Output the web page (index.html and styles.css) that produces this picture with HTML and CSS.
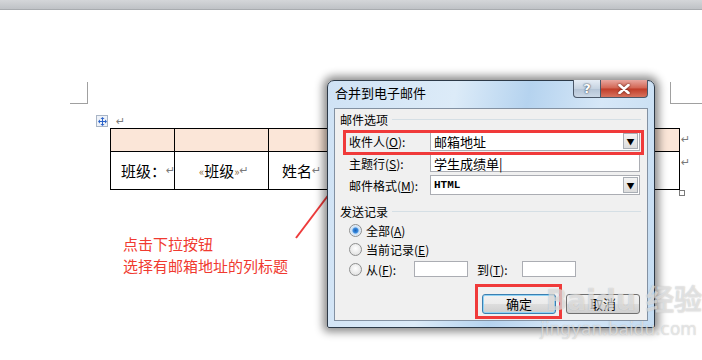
FILE: index.html
```html
<!DOCTYPE html>
<html lang="zh-CN">
<head>
    <meta charset="UTF-8" />
    <title>合并到电子邮件</title>
    <link rel="stylesheet" href="styles.css">
</head>
<body>

<div class="topbar"></div>

<div class="page">
    <div class="marks">
        <span class="mark mark-left"></span>
        <span class="mark mark-right"></span>
    </div>

    <div class="table-head">
        <span class="move-icon">
            <svg width="9" height="9" viewBox="0 0 9 9">
                <path d="M4.5 0 L6.5 2 H5 V4 H7 V2.5 L9 4.5 L7 6.5 V5 H5 V7 H6.5 L4.5 9 L2.5 7 H4 V5 H2 V6.5 L0 4.5 L2 2.5 V4 H4 V2 H2.5 Z" fill="#2a62c9"/>
            </svg>
        </span>
        <span class="ret">↵</span>
    </div>

    <div class="doc-table">
        <div class="row row-head">
            <div class="cell c1"></div>
            <div class="cell c2"></div>
            <div class="cell c3"></div>
            <div class="cell c4"></div>
        </div>
        <div class="row row-body">
            <div class="cell c1">班级：<span class="ret">↵</span></div>
            <div class="cell c2"><span class="chev">«</span>班级<span class="chev">»</span><span class="ret">↵</span></div>
            <div class="cell c3">姓名<span class="ret">↵</span></div>
            <div class="cell c4"></div>
        </div>
        <span class="end-mark end-1">↵</span>
        <span class="end-mark end-2">↵</span>
        <span class="resize-box"></span>
    </div>

    <div class="note">
        <p>点击下拉按钮</p>
        <p>选择有邮箱地址的列标题</p>
    </div>
</div>

<svg class="arrow" width="702" height="360" viewBox="0 0 702 360">
    <line x1="296" y1="238" x2="348" y2="169" stroke="#ee3b3b" stroke-width="2"/>
    <polygon points="356,158 342,167 353,175" fill="#ee3b3b"/>
</svg>

<div class="dialog">
    <div class="titlebar">
        <span class="title">合并到电子邮件</span>
        <div class="caption-btns">
            <span class="cap-btn help">?</span>
            <span class="cap-btn close">
                <svg width="12" height="10" viewBox="0 0 12 10">
                    <path d="M1.5 1 L10.5 9 M10.5 1 L1.5 9" stroke="#fff" stroke-width="2.6" stroke-linecap="round"/>
                </svg>
            </span>
        </div>
    </div>

    <div class="client">
        <div class="group-title"><span>邮件选项</span><i></i></div>

        <div class="field">
            <label>收件人(<u>O</u>):</label>
            <div class="combo">
                <span class="val">邮箱地址</span>
                <span class="drop">▼</span>
            </div>
        </div>
        <div class="field">
            <label>主题行(<u>S</u>):</label>
            <div class="textbox">学生成绩单|</div>
        </div>
        <div class="field">
            <label>邮件格式(<u>M</u>):</label>
            <div class="combo">
                <span class="val mono">HTML</span>
                <span class="drop">▼</span>
            </div>
        </div>

        <div class="group-title second"><span>发送记录</span><i></i></div>

        <div class="radio-row"><span class="radio on"></span><span>全部(<u>A</u>)</span></div>
        <div class="radio-row"><span class="radio"></span><span>当前记录(<u>E</u>)</span></div>
        <div class="radio-row range">
            <span class="radio"></span>
            <span class="from-label">从(<u>F</u>):</span>
            <span class="small-box"></span>
            <span class="to-label">到(<u>T</u>):</span>
            <span class="small-box"></span>
        </div>

        <div class="actions">
            <button class="btn btn-ok">确定</button>
            <button class="btn">取消</button>
        </div>

        <span class="hl hl-recipient"></span>
        <span class="hl hl-ok"></span>
    </div>
</div>

<div class="watermark">
    <div class="wm-logo">Baidu 经验</div>
    <div class="wm-url">jingyan.baidu.com</div>
</div>

</body>
</html>
```

FILE: styles.css
```css
body {
    margin: 0;
    width: 702px;
    height: 360px;
    overflow: hidden;
    background: #fff;
    font-family: "Noto Sans CJK SC", "DejaVu Sans", sans-serif;
    font-size: 12px;
    color: #000;
    position: relative;
}

.topbar {
    height: 9px;
    background: linear-gradient(#d4d6d9, #bfc2c6);
    border-bottom: 1px solid #a8abaf;
}

.page {
    padding-top: 72px;
}

/* page corner marks */
.marks {
    display: flex;
    justify-content: space-between;
    height: 22px;
    padding-left: 70px;
}

.mark {
    display: block;
    height: 21px;
    border-bottom: 1px solid #a0a0a0;
}

.mark-left {
    width: 17px;
    border-right: 1px solid #a0a0a0;
}

.mark-right {
    width: 31px;
    border-left: 1px solid #a0a0a0;
}

.table-head {
    display: flex;
    align-items: center;
    gap: 8px;
    height: 12px;
    margin-top: 11px;
    padding-left: 96px;
}

.move-icon {
    display: flex;
    align-items: center;
    justify-content: center;
    width: 10px;
    height: 10px;
    border: 1px solid #a9b5c6;
    background: #eef2f8;
}

.ret {
    color: #7a7a7a;
    font-size: 11px;
    font-family: "DejaVu Sans", sans-serif;
}

.doc-table {
    position: relative;
    margin-top: 1px;
    margin-left: 110px;
    width: 568px;
    border: 1px solid #000;
}

.row {
    display: flex;
}

.row-head {
    height: 22px;
    background: #fbe6d8;
    border-bottom: 1px solid #000;
}

.row-body {
    height: 37px;
}

.cell {
    display: flex;
    align-items: center;
    font-size: 15px;
    white-space: nowrap;
    box-sizing: border-box;
    border-right: 1px solid #000;
}

.c1 { width: 64px; padding-left: 10px; }
.c2 { width: 94px; padding-left: 24px; }
.c3 { width: 120px; padding-left: 13px; }
.c4 { flex: 1; border-right: none; }

.chev {
    color: #8a6a3a;
    font-size: 11px;
}

.end-mark {
    position: absolute;
    left: 570px;
    color: #7a7a7a;
    font-size: 11px;
    font-family: "DejaVu Sans", sans-serif;
}

.end-1 { top: 4px; }
.end-2 { top: 27px; }

.resize-box {
    position: absolute;
    left: 568px;
    top: 61px;
    width: 4px;
    height: 4px;
    border: 1px solid #7a7a7a;
}

.note {
    margin: 43px 0 0 123px;
    color: #f03a30;
    font-size: 15px;
    line-height: 22px;
}

.note p {
    margin: 0;
}

.arrow {
    position: absolute;
    left: 0;
    top: 0;
}

/* dialog window */
.dialog {
    position: absolute;
    left: 327px;
    top: 80px;
    width: 328px;
    height: 248px;
    box-sizing: border-box;
    border: 1px solid #2d3a48;
    border-radius: 7px 7px 2px 2px;
    background: linear-gradient(100deg, #cfe2f5 0%, #dcebf8 35%, #b5d3ef 55%, #d6e7f7 75%, #c4dcf2 100%);
    box-shadow: 0 0 9px 4px rgba(0, 0, 0, 0.45);
    padding: 0 6px 6px;
}

.titlebar {
    display: flex;
    justify-content: space-between;
    height: 27px;
}

.title {
    font-size: 13px;
    line-height: 13px;
    padding: 5px 0 0 1px;
}

.caption-btns {
    display: flex;
    margin-top: -1px;
    height: 18px;
}

.cap-btn {
    display: flex;
    align-items: center;
    justify-content: center;
    height: 18px;
    box-sizing: border-box;
    border: 1px solid #4b5869;
    border-top: none;
}

.help {
    width: 28px;
    border-radius: 0 0 0 4px;
    background: linear-gradient(#e6edf5, #c6d3e1 50%, #b3c3d5 51%, #cbd8e6);
    color: #fff;
    font-family: "DejaVu Sans", sans-serif;
    font-weight: bold;
    font-size: 13px;
    text-shadow: 0 0 2px #3c4a5c, 0 0 1px #3c4a5c;
}

.close {
    width: 47px;
    border-left: none;
    border-radius: 0 0 4px 0;
    background: linear-gradient(#e8a79f, #d26452 48%, #c03c28 52%, #d8735e);
}

.close svg {
    filter: drop-shadow(0 0 1px #5a1a10);
}

.client {
    position: relative;
    height: 213px;
    box-sizing: border-box;
    background: #f0f0f0;
    border: 1px solid #8391a2;
    padding: 0 6px 0 5px;
}

.group-title {
    display: flex;
    align-items: center;
    gap: 4px;
    height: 20px;
}

.group-title i {
    flex: 1;
    height: 1px;
    background: #d5dfe5;
}

.group-title.second {
    margin-top: 6px;
}

.field {
    display: flex;
    align-items: center;
    height: 20px;
    margin-top: 2px;
}

.field label {
    width: 90px;
    padding-left: 9px;
    box-sizing: border-box;
    white-space: nowrap;
}

.field + .field {
    margin-top: 2px;
}

.combo,
.textbox {
    flex: 1;
    display: flex;
    align-items: center;
    justify-content: space-between;
    height: 20px;
    box-sizing: border-box;
    border: 1px solid #abadb3;
    background: #fff;
    margin-right: 1px;
}

.textbox {
    height: 18px;
    padding-left: 3px;
    font-size: 13px;
}

.val {
    padding-left: 3px;
    font-size: 13px;
}

.mono {
    font-family: "Liberation Mono", monospace;
    font-weight: bold;
    font-size: 11px;
}

.drop {
    display: flex;
    align-items: center;
    justify-content: center;
    width: 15px;
    height: 16px;
    margin-right: 1px;
    border: 1px solid #a9aeb5;
    box-sizing: border-box;
    background: linear-gradient(#f4f4f4, #dcdcdc);
    font-size: 8px;
    color: #000;
}

.radio-row {
    display: flex;
    align-items: center;
    gap: 4px;
    height: 19px;
    padding-left: 9px;
    white-space: nowrap;
}

.radio {
    width: 11px;
    height: 11px;
    border-radius: 50%;
    border: 1px solid #8e8f8f;
    background: radial-gradient(circle at 50% 40%, #fff, #d9d9d9);
}

.radio.on {
    background: radial-gradient(circle, #1a5fb4 0, #3a8ce0 2.5px, #c7ddf3 3.5px, #eef4fb 6px);
}

.range {
    height: 20px;
}

.from-label {
    width: 44px;
}

.to-label {
    width: 41px;
    margin-left: 5px;
}

.small-box {
    width: 54px;
    height: 16px;
    box-sizing: border-box;
    border: 1px solid #abadb3;
    background: #fff;
}

.actions {
    display: flex;
    justify-content: flex-end;
    gap: 10px;
    margin-top: 15px;
    padding-right: 1px;
}

.btn {
    width: 74px;
    height: 20px;
    font-family: inherit;
    font-size: 13px;
    line-height: 16px;
    padding: 0;
    border: 1px solid #707070;
    border-radius: 3px;
    background: linear-gradient(#f2f2f2, #ebebeb 50%, #dddddd 51%, #cfcfcf);
    color: #000;
}

.btn-ok {
    border-color: #3c7fb1;
    box-shadow: inset 0 0 0 1px #8fd3f5;
}

/* red highlights drawn over the dialog */
.hl {
    position: absolute;
    border: 3px solid #f03a3a;
    box-sizing: border-box;
}

.hl-recipient {
    left: 8px;
    top: 21px;
    width: 301px;
    height: 25px;
}

.hl-ok {
    left: 140px;
    top: 175px;
    width: 87px;
    height: 35px;
}

.watermark {
    position: absolute;
    left: 546px;
    top: 283px;
    color: rgba(255, 255, 255, 0.55);
    text-shadow: 0 0 1px rgba(120, 120, 120, 0.5);
    font-family: "DejaVu Sans", sans-serif;
    pointer-events: none;
}

.wm-logo {
    font-size: 28px;
    font-weight: bold;
    line-height: 36px;
    white-space: nowrap;
}

.wm-url {
    margin-left: -6px;
    font-size: 17px;
    line-height: 20px;
    white-space: nowrap;
}
```
